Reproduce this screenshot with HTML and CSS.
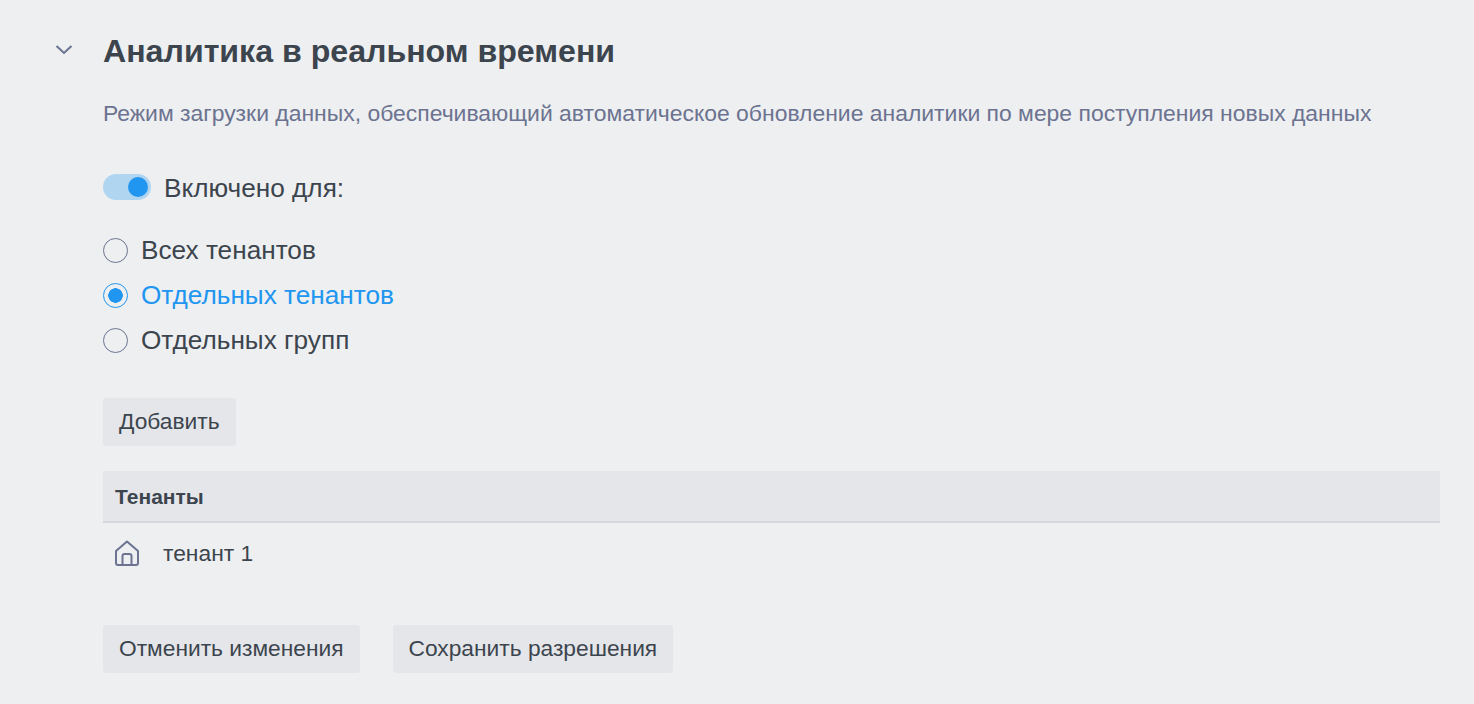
FILE: index.html
```html
<!DOCTYPE html>
<html>
<head>
    <title>Аналитика в реальном времени</title>
    <link rel="stylesheet" href="styles.css">
</head>
<body>
    <div class="section">
        <div class="chevron">
            <svg width="20" height="12" viewBox="0 0 20 12"><path d="M2.500 2l7.500 7 7.500-7" fill="none" stroke="#6b7390" stroke-width="2"/></svg>
        </div>
        <div class="content">
            <h2 class="title">Аналитика в реальном времени</h2>
            <p class="desc">Режим загрузки данных, обеспечивающий автоматическое обновление аналитики по мере поступления новых данных</p>

            <div class="toggle-row">
                <span class="toggle"><span class="toggle-knob"></span></span>
                <span class="toggle-label">Включено для:</span>
            </div>

            <div class="radios">
                <div class="radio-row"><span class="radio"></span><span>Всех тенантов</span></div>
                <div class="radio-row checked"><span class="radio"></span><span>Отдельных тенантов</span></div>
                <div class="radio-row"><span class="radio"></span><span>Отдельных групп</span></div>
            </div>

            <button class="btn">Добавить</button>

            <table class="tenants">
                <tr><th>Тенанты</th></tr>
                <tr>
                    <td>
                        <div class="tenant-cell">
                            <svg width="26" height="28" viewBox="0 0 26 28" fill="none" stroke="#6b7390" stroke-width="2" stroke-linejoin="round"><path d="M2 12L13 2.500 24 12v12a2 2 0 0 1-2 2H4a2 2 0 0 1-2-2z"/><path d="M8.500 26V17a2 2 0 0 1 2-2h5a2 2 0 0 1 2 2v9"/></svg>
                            <span>тенант 1</span>
                        </div>
                    </td>
                </tr>
            </table>

            <div class="actions">
                <button class="btn">Отменить изменения</button>
                <button class="btn">Сохранить разрешения</button>
            </div>
        </div>
    </div>
</body>
</html>
```

FILE: styles.css
```css
html, body {
    height: 100%;
}

body {
    margin: 0;
    font-family: "Liberation Sans", Arial, sans-serif;
    color: #3c454e;
    background-color: #eeeff1;
    overflow: hidden;
}

.section {
    display: flex;
    padding: 0 34px 0 54px;
}

.chevron {
    width: 49px;
    flex: none;
    padding-top: 44px;
}

.chevron svg {
    display: block;
}

.content {
    flex: 1;
}

.title {
    margin: 0;
    padding-top: 33px;
    font-size: 32.130px;
    line-height: 36px;
    font-weight: 700;
}

.desc {
    margin: 30px 0 0;
    font-size: 22.930px;
    line-height: 28px;
    color: #6b7390;
}

.toggle-row {
    display: flex;
    align-items: center;
    margin-top: 45px;
    height: 32px;
}

.toggle {
    display: block;
    position: relative;
    width: 48px;
    height: 26px;
    margin-top: -2px;
    border-radius: 13px;
    background-color: #b0d5f0;
}

.toggle-knob {
    position: absolute;
    top: 3px;
    right: 3px;
    width: 20px;
    height: 20px;
    border-radius: 50%;
    background-color: #2196f0;
}

.toggle-label {
    margin-left: 13px;
    font-size: 26.200px;
}

.radios {
    margin-top: 24px;
}

.radio-row {
    display: flex;
    align-items: center;
    height: 45px;
    font-size: 26.200px;
}

.radio {
    box-sizing: border-box;
    width: 25px;
    height: 25px;
    margin-right: 13px;
    border: 1px solid #6b7390;
    border-radius: 50%;
}

.radio-row.checked {
    color: #2196f0;
}

.radio-row.checked .radio {
    border-color: #2196f0;
    background: radial-gradient(circle, #2196f0 0, #2196f0 7px, transparent 7.500px);
}

.btn {
    display: block;
    height: 48px;
    padding: 0 16px 2px;
    border: none;
    border-radius: 3px;
    font-family: inherit;
    font-size: 22.750px;
    color: #3c454e;
    background-color: #e5e6ea;
}

.radios + .btn {
    margin-top: 35px;
}

.tenants {
    width: 100%;
    margin-top: 25px;
    border-collapse: collapse;
}

.tenants th {
    height: 48px;
    padding: 2px 12px 0;
    text-align: left;
    font-size: 21px;
    background-color: #e5e6ea;
    border-bottom: 2px solid #d5d7dc;
}

.tenants td {
    height: 62px;
    padding: 0 11px;
    font-size: 22.800px;
}

.tenant-cell {
    display: flex;
    align-items: center;
    gap: 23px;
    padding-bottom: 2px;
}

.actions {
    display: flex;
    gap: 33px;
    margin-top: 40px;
}
```
